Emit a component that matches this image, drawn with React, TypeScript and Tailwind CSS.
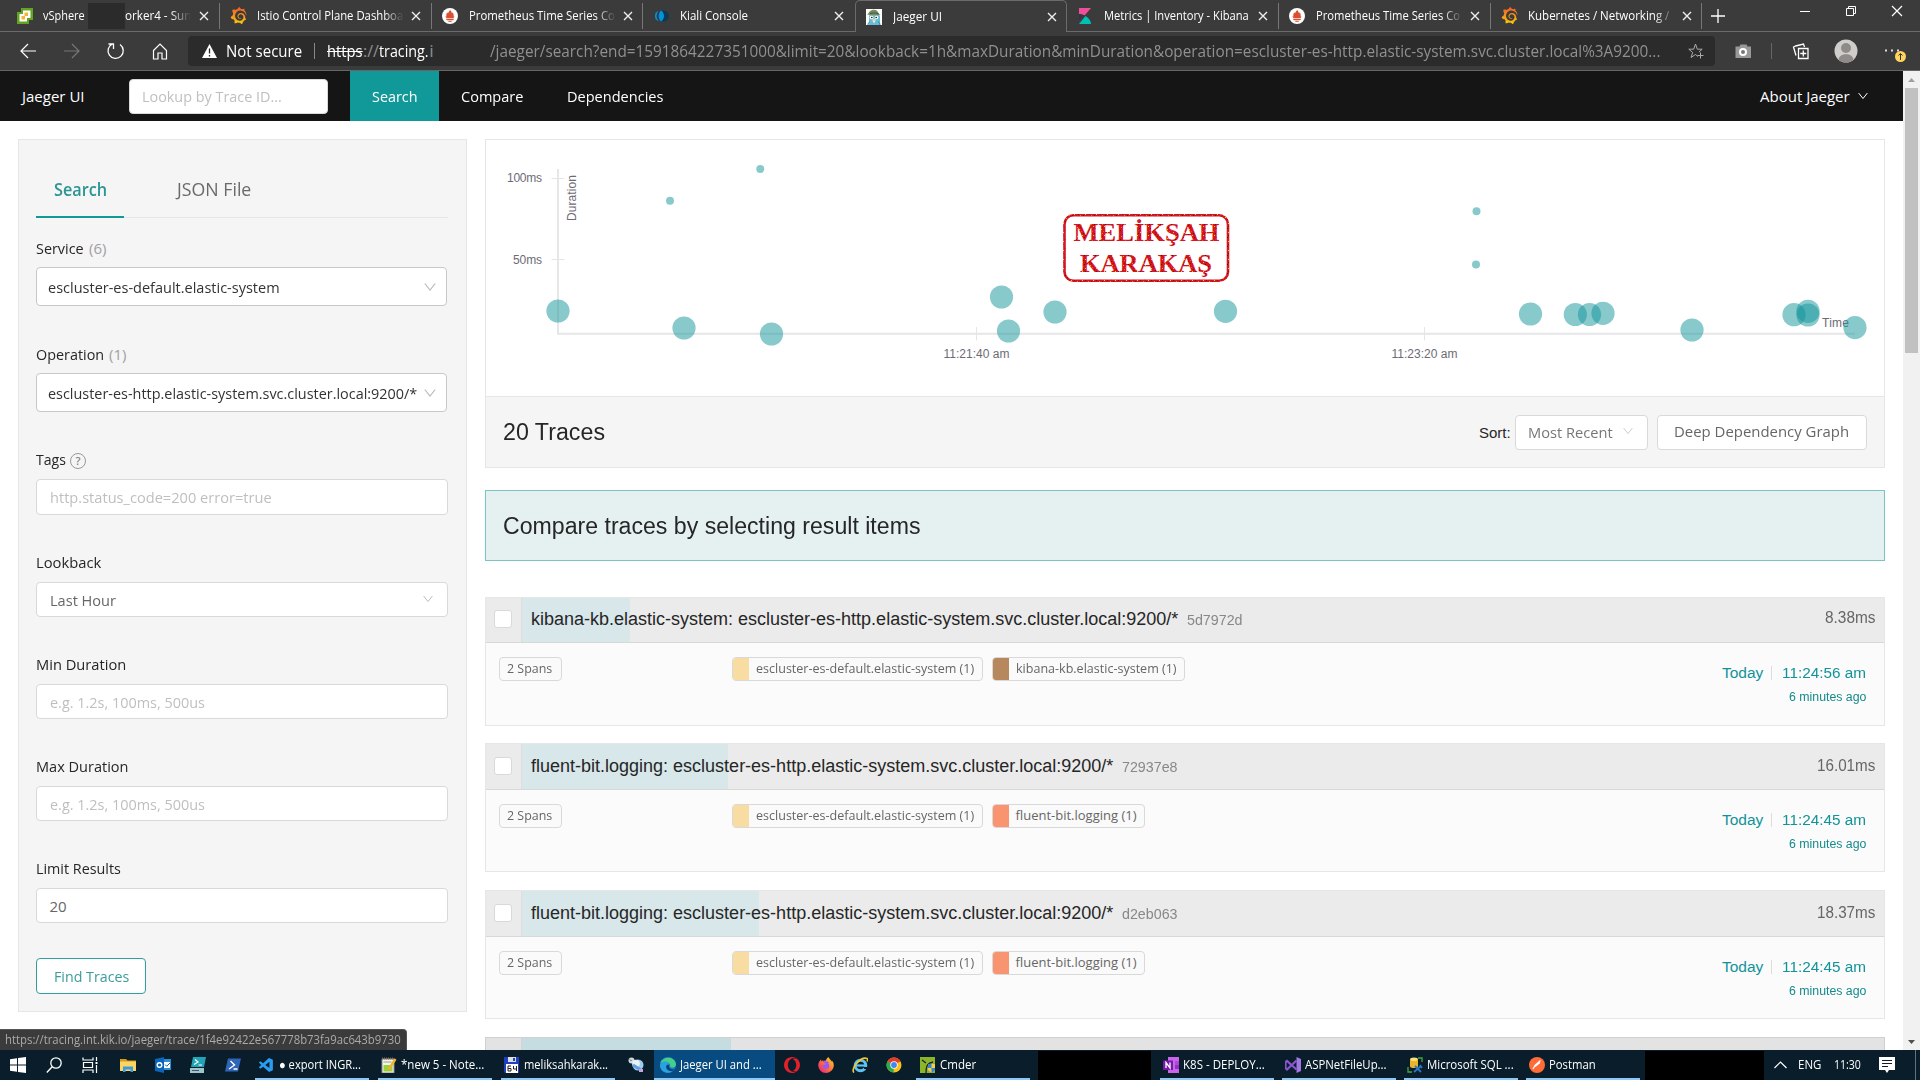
import React, { useLayoutEffect, useRef, useState } from "react";
import { SiGrafana, SiOpera, SiFirefoxbrowser } from "react-icons/si";
import { VscVscode } from "react-icons/vsc";

/** Single line of text condensed or stretched to an exact width. */
function Fit({ w, className = "", children }: { w: number; className?: string; children: React.ReactNode }) {
  const ref = useRef<HTMLSpanElement>(null);
  const [k, setK] = useState(1);
  useLayoutEffect(() => {
    if (ref.current) setK(w / ref.current.offsetWidth);
  }, [w]);
  return (
    <span className={"inline-block shrink-0 whitespace-nowrap " + className} style={{ width: w }}>
      <span ref={ref} className="inline-block origin-left" style={{ transform: `scaleX(${k})` }}>
        {children}
      </span>
    </span>
  );
}

/* ---------- favicons ---------- */

const VSphere = () => (
  <svg width="16" height="16" viewBox="0 0 16 16">
    <path d="M4 0h12v12h-4v4H0V4h4z" fill="#62a420" />
    <path d="M6 2.500h7.500v7.500H10v3.500H2.500V6H6z" fill="#fff" />
    <rect x="7.500" y="4.500" width="3.500" height="3.500" fill="#f2b632" />
    <rect x="4.500" y="8" width="3.500" height="3.500" fill="#f2b632" />
  </svg>
);
const Grafana = () => (
  <>
    <svg width="0" height="0" className="absolute">
      <linearGradient id="graf" x1="0" y1="0" x2="0" y2="1">
        <stop offset="0" stopColor="#f05a28" />
        <stop offset="1" stopColor="#fbca0a" />
      </linearGradient>
    </svg>
    <SiGrafana size={17} fill="url(#graf)" />
  </>
);
const Prometheus = () => (
  <span className="flex size-4 items-center justify-center rounded-full bg-white">
    <svg width="16" height="16" viewBox="0 0 16 16">
      <path d="M8 1.500c.4 1.400 1.900 2.300 2 3.900.3-.3.5-.7.5-1.200C11.700 5.500 12 7 11.400 8.500l1-.3c-.2 1-.9 1.800-.9 1.800h-7S3.700 9.200 3.500 8.200l1.100.3C4 7 4.300 5.500 5.500 4.200c0 .7.2 1 .5 1.300C6.200 4 7.800 3.200 8 1.500z" fill="#da4e31" />
      <rect x="4.300" y="10.700" width="7.400" height="1.400" fill="#da4e31" />
      <path d="M5.500 12.800h5c-.5 1.500-4.500 1.500-5 0z" fill="#da4e31" />
    </svg>
  </span>
);
const Kiali = () => (
  <svg width="16" height="16" viewBox="0 0 16 16">
    <circle cx="10.500" cy="8" r="5.500" fill="#0b3a52" />
    <path d="M5.500 3a5.300 5.300 0 0 0 0 10 8 8 0 0 1 0-10z" fill="#0093dd" />
    <path d="M8 2.500c4 2.500 4 8.500 0 11-3.200-3-3.200-8 0-11z" fill="#0093dd" />
  </svg>
);
const JaegerIcon = () => (
  <svg width="16" height="16" viewBox="0 0 16 16">
    <rect width="16" height="16" fill="#fff" />
    <path d="M3 16V7c0-3 10-3 11 0v9z" fill="#68bfd5" />
    <path d="M1 5.500c2-1 2-3.500 5-4.500s6 0 6.500 3.500l2 1.500C10 6 5 6.500 1 5.500z" fill="#7c8a5d" />
    <path d="M4 4.500c3-.8 6-.8 9 .5" stroke="#47552f" fill="none" />
    <circle cx="5.500" cy="8.500" r="1.800" fill="#fff" /><circle cx="10.500" cy="8.500" r="1.800" fill="#fff" />
    <circle cx="5.800" cy="8.500" r=".8" fill="#111" /><circle cx="10.200" cy="8.500" r=".8" fill="#111" />
    <ellipse cx="8" cy="11" rx="1.800" ry="1.200" fill="#e9d3b2" /><path d="M7.200 12h1.600v1.500H7.200z" fill="#fff" />
    <path d="M2 16c0-2 1-3 2-3M14 16c0-2-1-3-2-3" stroke="#3b7d92" fill="none" />
  </svg>
);
const Kibana = () => (
  <svg width="16" height="16" viewBox="0 0 16 16">
    <path d="M2 0h12L2 14z" fill="#f04e98" />
    <path d="M2 6c2.500 0 4.500.6 6 1.600L2 14z" fill="#343741" />
    <path d="M8.500 8C12 10 14 13 14 16H2z" fill="#00bfb3" />
  </svg>
);

const X = () => (
  <svg width="10" height="10" viewBox="0 0 10 10" className="shrink-0">
    <path d="M1 1l8 8M9 1L1 9" stroke="#eee" strokeWidth="1.400" />
  </svg>
);

const tabs = [
  { icon: <VSphere />, text: "vSphere", w: 42, masked: true },
  { icon: <Grafana />, text: "Istio Control Plane Dashboa", w: 146, fade: true },
  { icon: <Prometheus />, text: "Prometheus Time Series Co", w: 146, fade: true },
  { icon: <Kiali />, text: "Kiali Console", w: 68 },
  { icon: <JaegerIcon />, text: "Jaeger UI", w: 49, active: true },
  { icon: <Kibana />, text: "Metrics | Inventory - Kibana", w: 145 },
  { icon: <Prometheus />, text: "Prometheus Time Series Co", w: 144, fade: true },
  { icon: <Grafana />, text: "Kubernetes / Networking /", w: 141, fade: true },
];

function TabStrip() {
  return (
    <div className="flex h-8 shrink-0 bg-[#3b3b3b] text-[12px] leading-[32px] text-white">
      <div className="w-[8px] border-b border-[#6b6b6b]" />
      {tabs.map((t, i) => (
        <div
          key={i}
          className={
            "relative flex w-[211.800px] shrink-0 items-center " +
            (t.active ? "rounded-t-[5px] border border-b-0 border-[#6b6b6b]" : "border-b border-[#6b6b6b]")
          }
        >
          <span className={"flex shrink-0 items-center " + (i === 0 ? "ml-[9px] w-[26px]" : "ml-[10px] w-[27px]")}>{t.icon}</span>
          <span className={"flex items-center overflow-hidden " + (i === 0 ? "w-[148px] " : "w-[147px] ") + (t.fade || t.masked ? "[mask-image:linear-gradient(to_right,black_86%,transparent)]" : "")}>
            <Fit w={t.w}>{t.text}</Fit>
            {t.masked && (
              <>
                <span className="ml-[3px] h-[26px] w-[37px] shrink-0 bg-[#2b2b2b]" />
                <Fit w={66}>orker4 - Sun</Fit>
              </>
            )}
          </span>
          <span className={"flex " + (i === 0 ? "ml-[8px]" : "ml-[7px]")}><X /></span>
          {!t.active && i !== 3 && <span className="ml-auto h-[26px] w-px bg-[#777]" />}
        </div>
      ))}
      <div className="flex flex-1 items-center border-b border-[#6b6b6b] pl-[9px]">
        <svg width="14" height="14"><path d="M7 0v14M0 7h14" stroke="#fff" strokeWidth="1.300" /></svg>
        <svg width="104" height="14" viewBox="0 0 104 14" className="mb-[9px] ml-[74px]">
          <path d="M1 7.500h10" stroke="#fff" />
          <path d="M47.500 4.500h7v7h-7zM49.500 4.500v-2h7v7h-2" stroke="#fff" fill="none" />
          <path d="M93 2l10 10M103 2l-10 10" stroke="#fff" strokeWidth="1.200" />
        </svg>
      </div>
    </div>
  );
}

function AddressBar() {
  return (
    <div className="flex h-[39px] shrink-0 items-center border-b border-[#666] bg-[#3b3b3b] text-[16px] text-white">
      <svg width="188" height="38" viewBox="0 0 188 38" fill="none" className="shrink-0">
        <path d="M36 19H21M28 12l-7 7 7 7" stroke="#fff" strokeWidth="1.200" />
        <path d="M64 19h15M72 12l7 7-7 7" stroke="#777" strokeWidth="1.200" />
        <path d="M120 12.500a7.600 7.600 0 1 1-7.500-.7M108.500 12h5v5" stroke="#fff" strokeWidth="1.300" />
        <path d="M153.500 18.500l6.500-6.500 6.500 6.500v8.500h-4.500v-6h-4v6h-4.500z" stroke="#fff" strokeWidth="1.200" />
      </svg>
      <div className="flex h-[30px] w-[1527px] items-center rounded-[4px] bg-[#2b2b2b]">
        <svg width="15" height="14" viewBox="0 0 15 14" className="ml-[14px]">
          <path d="M7.500 0L15 14H0z" fill="#fff" /><path d="M7.500 4.500v5M7.500 11v1.500" stroke="#222" strokeWidth="1.300" />
        </svg>
        <Fit w={76} className="ml-[9px]">Not secure</Fit>
        <span className="ml-[12px] h-4 w-px bg-[#888]" />
        <Fit w={36} className="ml-[12px]"><s>https</s></Fit>
        <Fit w={16} className="text-[#909090]">://</Fit>
        <Fit w={50}>tracing.</Fit>
        <Fit w={5} className="text-[#7a8a90]">i</Fit>
        <Fit w={1170} className="ml-[56px] text-[#909090]">
          /jaeger/search?end=1591864227351000&amp;limit=20&amp;lookback=1h&amp;maxDuration&amp;minDuration&amp;operation=escluster-es-http.elastic-system.svc.cluster.local%3A9200...
        </Fit>
        <svg width="16" height="16" viewBox="0 0 16 16" className="ml-[28px]" fill="none" stroke="#aaa">
          <path d="M10 13.500L7.500 11.500 3 14.500l1.700-5L.8 6.200h4.900L7.500 1l1.800 5.200h4.900l-3.300 2.800M12.500 9.500v6M9.500 12.500h6" />
        </svg>
      </div>
      <svg width="205" height="38" viewBox="0 0 205 38" fill="none" className="shrink-0">
        <path d="M20.500 14.500h4l1-2h6l1 2h3.500v11.500H20.500z" fill="#999" /><circle cx="28" cy="20" r="3" stroke="#fff" strokeWidth="2" fill="#777" />
        <path d="M56.500 11v16" stroke="#666" />
        <path d="M83.500 16.500h9.500v10h-9.500zM88.300 18.500v6M85.300 21.500h6M81 23.500l-2.500-8.500 3-1.500M80.500 14l8-2 1 3" stroke="#fff" strokeWidth="1.300" />
        <circle cx="131" cy="19" r="11.500" fill="#d0cecb" /><circle cx="131" cy="16" r="5" fill="#8e8b88" />
        <path d="M123.500 27.500c1-7 14-7 15 0-4 4-11 4-15 0z" fill="#8e8b88" />
        <path d="M170 18.500h2M176 18.500h2M182 18.500h2" stroke="#ddd" strokeWidth="2" />
        <circle cx="185.500" cy="24.500" r="5.500" fill="#ffd35c" /><path d="M185.500 28v-6M183.500 23.500l2-2 2 2" stroke="#333" />
      </svg>
    </div>
  );
}

const Chevron = ({ c = "#bbb", s = 12 }: { c?: string; s?: number }) => (
  <svg width={s} height={s} viewBox="0 0 12 12" className="shrink-0">
    <path d="M.8 2.500L6 9l5.200-6.500" stroke={c} strokeWidth="1.200" fill="none" />
  </svg>
);

function Nav() {
  return (
    <div className="flex h-[50px] shrink-0 items-center bg-[#151515] text-[15px] text-white">
      <Fit w={63} className="ml-[22px]">Jaeger UI</Fit>
      <div className="ml-[44px] flex h-[35px] w-[199px] items-center rounded-[4px] border border-[#d9d9d9] bg-white pl-[12px] text-[#bfbfbf]">
        <Fit w={140}>Lookup by Trace ID...</Fit>
      </div>
      <div className="ml-[22px] flex h-full w-[89px] items-center bg-[#119999] pl-[22px]"><Fit w={46}>Search</Fit></div>
      <Fit w={62} className="ml-[22px]">Compare</Fit>
      <Fit w={96} className="ml-[44px]">Dependencies</Fit>
      <Fit w={90} className="mr-[8px] ml-auto">About Jaeger</Fit>
      <span className="mr-[35px] flex"><Chevron c="#fff" s={10} /></span>
    </div>
  );
}

type FieldProps = { label: string; lw: number; extra?: React.ReactNode; value: string; vw: number; tall?: boolean; tone: string; arrow?: boolean; cls: string; box: string };
function Field({ label, lw, extra, value, vw, tall, tone, arrow, cls, box }: FieldProps) {
  return (
    <div className={cls}>
      <div className="flex h-5 items-center pb-[2px] text-[#262626]">
        <Fit w={lw}>{label}</Fit>
        {extra}
      </div>
      <div className={"flex items-center rounded-[4px] border bg-white " + (tall ? "pl-[11px] " : "pl-[12.500px] ") + box + " " + tone}>
        <Fit w={vw}>{value}</Fit>
        {arrow && <span className={tall ? "mr-[10px] ml-auto flex" : "mr-[14px] mb-[2px] ml-auto flex"}><Chevron s={tall ? 12 : 10} /></span>}
      </div>
    </div>
  );
}

function SearchForm() {
  const tall = "mt-[8px] h-[39px] w-[411px] border-[#c8c8c8]";
  const low = "mt-[9px] h-[35px] w-[412px] border-[#d9d9d9]";
  return (
    <div className="ml-[18px] h-[873px] w-[449px] shrink-0 border border-[#e6e6e6] bg-[#f5f5f5] pl-[17px] text-[15px] leading-5">
      <div className="flex h-[78px] w-[412px] border-b border-[#e6e6e6] text-[17.500px]">
        <div className="-mb-px flex w-[88px] items-center border-b-2 border-[#119999] pt-[21px] pl-[18px] font-semibold text-[#2a9594]">
          <Fit w={53}>Search</Fit>
        </div>
        <div className="ml-[53px] flex items-center pt-[20px] text-[#6a6a6a]"><Fit w={74}>JSON File</Fit></div>
      </div>
      <Field cls="mt-[21px]" label="Service" lw={48} extra={<Fit w={17} className="ml-[5px] text-[#a0a0a0]">(6)</Fit>} value="escluster-es-default.elastic-system" vw={232} tall arrow tone="text-[#333]" box={tall} />
      <Field cls="mt-[39px]" label="Operation" lw={68} extra={<Fit w={17} className="ml-[5px] text-[#a0a0a0]">(1)</Fit>} value="escluster-es-http.elastic-system.svc.cluster.local:9200/*" vw={369} tall arrow tone="text-[#333]" box={tall} />
      <Field
        cls="mt-[38px]" label="Tags" lw={30} value="http.status_code=200 error=true" vw={222} tone="text-[#bfbfbf]"
        box="mt-[9px] h-[36px] w-[412px] border-[#d9d9d9]"
        extra={<span className="mt-[4px] ml-[4px] flex size-4 shrink-0 items-center justify-center rounded-full border border-[#999] text-[11px] font-semibold text-[#888]">?</span>}
      />
      <Field cls="mt-[38px]" label="Lookback" lw={65} value="Last Hour" vw={66} arrow tone="text-[#666]" box={low} />
      <Field cls="mt-[38px]" label="Min Duration" lw={90} value="e.g. 1.2s, 100ms, 500us" vw={155} tone="text-[#bfbfbf]" box={low} />
      <Field cls="mt-[38px]" label="Max Duration" lw={92} value="e.g. 1.2s, 100ms, 500us" vw={155} tone="text-[#bfbfbf]" box={low} />
      <Field cls="mt-[38px]" label="Limit Results" lw={85} value="20" vw={17} tone="text-[#666]" box={low} />
      <div className="mt-[35px] flex h-[36px] w-[110px] items-center rounded-[4px] border border-[#2f9f9e] bg-white pl-[17px] text-[#3a9c9b]">
        <Fit w={75}>Find Traces</Fit>
      </div>
    </div>
  );
}

const dots: [number, number, number][] = [
  [558, 311, 11.6], [684, 328, 11.6], [771.5, 334, 11.6], [1001.5, 297, 11.6], [1008.5, 331, 11.6], [1055, 312, 11.6],
  [1225.5, 311.3, 11.6], [1530.5, 314, 11.6], [1575.3, 314.5, 11.6], [1589.5, 314.5, 11.6], [1603, 313.3, 11.6],
  [1692, 330, 11.6], [1794, 314.7, 11.6], [1808, 311.3, 11.6], [1808, 315, 11.6], [1855, 327.6, 11.6],
  [670, 200.7, 4], [760.3, 169, 4], [1476.5, 211.2, 4], [1476, 264.6, 4],
];

/* Speckles of the stamp's ink, on an 11 x 9 tile. */
const specks: [number, number, string][] = [
  [0, 0, "#7a1010"], [4, 1, "#f2c832"], [8, 0, "#c0208a"], [2, 2, "#8a1414"], [6, 3, "#5e0c0c"], [10, 2, "#ee7a30"],
  [1, 4, "#e0b030"], [5, 5, "#c42a92"], [9, 5, "#6e1010"], [3, 6, "#f04040"], [7, 7, "#e8c040"], [0, 7, "#a01818"],
  [5, 8, "#6e1010"], [10, 8, "#b82080"], [2, 8, "#e66a20"], [7, 1, "#8a1010"],
];

function Chart() {
  return (
    <svg width="1398" height="256" viewBox="486 140 1398 256" fontFamily="Liberation Sans, Arial, sans-serif" fontSize="12" fill="#6b6b76">
      <defs>
        <pattern id="ink" width="11" height="9" patternUnits="userSpaceOnUse">
          <rect width="11" height="9" fill="#d8141c" />
          {specks.map(([x, y, c]) => <rect key={x + "-" + y} x={x} y={y} width="1" height="1" fill={c} />)}
        </pattern>
      </defs>
      <g stroke="#e6e6e9" fill="none">
        <path d="M558 169v165.500M557 333.700h1298" strokeWidth="2" />
        <path d="M551.500 178.500h13M551.500 259.500h13M976.500 327v13.500M1424.500 327v13.500" />
      </g>
      <text x="507" y="182" textLength="35">100ms</text>
      <text x="513" y="264" textLength="29">50ms</text>
      <text x="943.500" y="358" textLength="66">11:21:40 am</text>
      <text x="1391.500" y="358" textLength="66">11:23:20 am</text>
      <text transform="translate(576 221) rotate(-90)" textLength="46">Duration</text>
      <text x="1822" y="327" textLength="27">Time</text>
      {dots.map(([x, y, r], i) => <circle key={i} cx={x} cy={y} r={r} fill="#12939a" opacity=".5" />)}
      <rect x="1064.500" y="215.300" width="163.500" height="65.500" rx="9" fill="none" stroke="url(#ink)" strokeWidth="2.600" />
      <g fontFamily="Liberation Serif, Times New Roman, serif" fontWeight="bold" fontSize="26" fill="url(#ink)">
        <text x="1073.500" y="241" textLength="146" lengthAdjust="spacingAndGlyphs">MELİKŞAH</text>
        <text x="1080" y="272.300" textLength="132" lengthAdjust="spacingAndGlyphs">KARAKAŞ</text>
      </g>
    </svg>
  );
}

const arial = "font-['Liberation_Sans',Arial,sans-serif]";

type Trace = { title: string; tw: number; id: string; bar: number; dur: string; dw: number; tag: string; tagW: number; swatch: string; time: string; cls: string; head: string };
const es = "escluster-es-http.elastic-system.svc.cluster.local:9200/*";
const traces: Trace[] = [
  { title: "kibana-kb.elastic-system: " + es, tw: 647, id: "5d7972d", bar: 109, dur: "8.38ms", dw: 50, tag: "kibana-kb.elastic-system (1)", tagW: 161, swatch: "bg-[#b7885e]", time: "11:24:56 am", cls: "mt-[36px] h-[129px]", head: "h-[45px] pb-[2px]" },
  { title: "fluent-bit.logging: " + es, tw: 582, id: "72937e8", bar: 207, dur: "16.01ms", dw: 58, tag: "fluent-bit.logging (1)", tagW: 121, swatch: "bg-[#f89570]", time: "11:24:45 am", cls: "mt-[17px] h-[129px]", head: "h-[46px]" },
  { title: "fluent-bit.logging: " + es, tw: 582, id: "d2eb063", bar: 238, dur: "18.37ms", dw: 58, tag: "fluent-bit.logging (1)", tagW: 121, swatch: "bg-[#f89570]", time: "11:24:45 am", cls: "mt-[18px] h-[129px]", head: "h-[46px]" },
];

const Tag = ({ w, swatch, children }: { w: number; swatch: string; children: string }) => (
  <span className="mr-[9px] flex h-6 items-center overflow-hidden rounded-[4px] border border-[#d9d9d9] bg-[#fafafa] pr-[7.500px] text-[#666]">
    <span className={"-my-px -ml-px h-6 w-[17px] " + swatch} />
    <Fit w={w} className="ml-[7px]">{children}</Fit>
  </span>
);

function Result({ t }: { t: Trace }) {
  const first = t.head !== "h-[46px]";
  return (
    <div className={"shrink-0 border border-[#e6e6e6] bg-[#fbfbfb] " + t.cls}>
      <div className={"flex border-b border-[#d8d8d8] bg-[#ebebeb] " + (first ? "h-[45px] " : "h-[46px] ") + arial}>
        <div className="flex w-[36px] items-center border-r border-[#ddd] pl-[8px]">
          <span className={"size-[18px] rounded-[3px] border border-[#d9d9d9] bg-white " + (first ? "mb-[2px]" : "mb-px")} />
        </div>
        <div className={"relative flex flex-1 items-center " + (first ? "pb-[2px]" : "")}>
          <div className="absolute inset-y-0 left-0 bg-[#d7e7ea]" style={{ width: t.bar - 1 }} />
          <Fit w={t.tw} className="relative ml-[9px] text-[18px] text-[#262626]">{t.title}</Fit>
          <Fit w={56} className="relative mt-[2px] ml-[9px] text-[14px] text-[#888]">{t.id}</Fit>
          <Fit w={t.dw} className="mr-[9px] mb-[2px] ml-auto text-[16px] text-[#666]">{t.dur}</Fit>
        </div>
      </div>
      <div className="flex pt-[14px] text-[13px]">
        <span className="ml-[13px] flex h-6 w-[63px] items-center rounded-[4px] border border-[#d9d9d9] bg-[#fafafa] pl-[7px] text-[#666]"><Fit w={45}>2 Spans</Fit></span>
        <span className="ml-[170px] flex">
          <Tag w={218} swatch="bg-[#f8dca1]">escluster-es-default.elastic-system (1)</Tag>
          <Tag w={t.tagW} swatch={t.swatch}>{t.tag}</Tag>
        </span>
        <div className={"mt-[6px] mr-[18px] ml-auto flex flex-col items-end text-[#11939a] " + arial}>
          <div className="flex h-5 items-center text-[15.500px]">
            <Fit w={41}>Today</Fit>
            <span className="mr-[10px] ml-[8px] h-[14px] w-px bg-[#ddd]" />
            <Fit w={84}>{t.time}</Fit>
          </div>
          <Fit w={77} className="mt-[4px] text-[12px] leading-5 text-[#158a8c]">6 minutes ago</Fit>
        </div>
      </div>
    </div>
  );
}

/* ---------- taskbar ---------- */

const Ico = ({ children }: { children: React.ReactNode }) => (
  <svg width="16" height="16" viewBox="0 0 16 16" fill="none" className="shrink-0">{children}</svg>
);
const icons = {
  win: <Ico><path d="M0 2.200L7 1.200v6.300H0zM8 1l8-1v7.500H8zM0 8.500h7v6.300l-7-1zM8 8.500h8V16l-8-1z" fill="#fff" /></Ico>,
  search: <Ico><circle cx="10" cy="6" r="5.200" stroke="#fff" strokeWidth="1.300" /><path d="M6.200 9.800L.8 15.500" stroke="#fff" strokeWidth="1.400" /></Ico>,
  task: <Ico><path d="M1 .5v2.500h10V.5M1 16v-3h10v3M1.500 5.500h9v5h-9zM14.500 0v4M14.500 8v8" stroke="#fff" strokeWidth="1.200" /><path d="M13.500 5h2v2h-2z" fill="#fff" /></Ico>,
  folder: <Ico><path d="M0 2h6l1.500 1.500H16V14H0z" fill="#d99a1c" /><path d="M0 4.500h16V14H0z" fill="#fcd462" /><path d="M3 15V9.500h10V15h-2.500v-2.500h-5V15z" fill="#3c9be0" /></Ico>,
  outlook: <Ico><path d="M6 2h10v11H6z" fill="#2a8dd8" /><path d="M9 5h6v6H9z" fill="#fff" /><path d="M10 7.500l1.700 1.700L15 6" stroke="#0a5fa8" /><path d="M0 2l9-2v16l-9-2z" fill="#0b64b8" /><circle cx="4.500" cy="8" r="2.300" stroke="#fff" strokeWidth="1.400" /></Ico>,
  ise: <Ico><path d="M3 0h13l-2 10H1z" fill="#1fa5b5" /><path d="M5 2.500l3 2.500-4 2.500M8.500 8h3.500" stroke="#fff" strokeWidth="1.200" /><path d="M0 11h14v5H0z" fill="#9fc4cc" /><path d="M2 13.500h7" stroke="#456" /></Ico>,
  ps: <Ico><path d="M3 1.500h13l-3 13H0z" fill="#2f65b8" /><path d="M5.500 4l4 4-5.500 4M8.500 12h4" stroke="#fff" strokeWidth="1.400" /></Ico>,
  npp: <Ico><path d="M1 2h12v14H1z" fill="#f3f6e4" stroke="#889" /><path d="M2.500 8h9v6.500h-9z" fill="#9ad13b" /><path d="M2.500 5h8" stroke="#999" /><path d="M1 1.500h12" stroke="#8a6a50" strokeWidth="2" strokeDasharray="1 1" /><path d="M14.500 2L7.500 12.500" stroke="#f0b32d" strokeWidth="2.400" /></Ico>,
  tc: <Ico><path d="M0 0h15v16H1l-1-1z" fill="#1f3fc0" /><path d="M4 0h8v5H4z" fill="#ddd" /><path d="M9 1h2v3H9z" fill="#1f3fc0" /><path d="M2 7h12v9H2z" fill="#fff" /><path d="M7 9H4v5h3v-2.500H4M9.500 9v3H13M12.500 9v5" stroke="#222" /></Ico>,
  doc: <Ico><circle cx="3.500" cy="3.500" r="3" fill="#ccd9df" /><circle cx="10" cy="8" r="5.500" fill="#9fcdea" /><circle cx="8" cy="6.500" r="3.800" fill="#e8f2f6" /><path d="M5 8l8 5" stroke="#5f9fe0" strokeWidth="3" /><path d="M11 12h4v3h-4z" fill="#c9a4dd" /><path d="M2 2.500l1.500 1.500" stroke="#444" /></Ico>,
  edge: <Ico><circle cx="8" cy="8" r="8" fill="#1a77c9" /><path d="M.3 6C2 0 14-2 16 7c.3 4-5 4.500-6 2.500 1-3-2-5-5-4.500-2 .2-4 .5-4.700 1z" fill="#45cf87" /><path d="M.2 7c2-4 8-3.500 8.800 0C6 8 6 13 12 14.500 5 18-1 13 .2 7z" fill="#2ba2e0" /><path d="M7 7.500c-2 3 0 6.500 4.500 6.500 1 0 2-.5 3-1.500-3 .5-6-1-5.500-4z" fill="#0b3d73" /></Ico>,
  ie: <Ico><circle cx="8.500" cy="8.500" r="5.300" stroke="#5cc3f2" strokeWidth="3" /><path d="M4 8.500h10" stroke="#5cc3f2" strokeWidth="2.200" /><path d="M12 10h4v2h-4z" fill="#0a1d2b" /><path d="M2 15.500C-2 12 9-1 15 1.500c1 .5.500 2 0 3" stroke="#f4c534" strokeWidth="1.600" /></Ico>,
  chrome: <Ico><circle cx="8" cy="8" r="7.500" fill="#fbc116" /><path d="M8 8L1.500 4.200A7.500 7.500 0 0 1 14.500 4.200z" fill="#e33b2e" /><path d="M8 8L1.500 4.200A7.500 7.500 0 0 0 7.500 15.500z" fill="#2da94f" /><circle cx="8" cy="8" r="3.700" fill="#fff" /><circle cx="8" cy="8" r="2.900" fill="#4086f4" /></Ico>,
  cmder: <Ico><path d="M0 0h15v16H0z" fill="#8bb62b" /><path d="M2 3l4 3M6 16c0-8 2-10 7-11" stroke="#222" strokeWidth="1.300" /><path d="M8 7h7v6l-3.500 3L8 13z" fill="#3b82d4" /><path d="M11.500 7H15v4h-3.500zM8 11h3.500v5L8 13z" fill="#f4d03f" /></Ico>,
  onenote: <Ico><path d="M5 0h11v16H5z" fill="#ca64ea" /><path d="M12 4h4v4h-4z" fill="#ae4bd5" /><path d="M12 8h4v4h-4z" fill="#9332bf" /><path d="M0 3.500h10v9.500H0z" fill="#7719aa" /><path d="M3 11V5.500l4 5.500V5.500" stroke="#fff" strokeWidth="1.300" /></Ico>,
  vs: <Ico><path d="M11.500 0L16 2v12l-4.500 2z" fill="#a178e0" /><path d="M11.500 3.500L2 12.500.5 11V5L2 4l9.500 8.500" stroke="#8a55cf" strokeWidth="2.200" /></Ico>,
  sql: <Ico><ellipse cx="7" cy="2.500" rx="4" ry="2" fill="#f8e27c" /><path d="M3 2.500v7c1 2 7 2 8 0v-7c-1 2-7 2-8 0z" fill="#eab42b" /><path d="M11 1h4v4M1 10v5h4" stroke="#47a53c" strokeWidth="1.300" /><path d="M7 15l7-6M8 9l6 6M13 8l2 3" stroke="#2a78c2" strokeWidth="1.800" /></Ico>,
  postman: <Ico><circle cx="8" cy="8" r="8" fill="#ff6c37" /><path d="M4 12l2-3.500L11.500 3.500M6 9.500l5-4" stroke="#fff" strokeWidth="1.200" /></Ico>,
};

type Item = { icon: React.ReactNode; text: string; w: number; gap: string; pad: string; active?: boolean };
function TaskItem({ icon, text, w, gap, pad, active }: Item) {
  return (
    <div className={"flex h-[30px] shrink-0 items-center border-b-2 border-[#8ec8f6] pt-[2px] " + gap + " " + (active ? "w-[121px] bg-[#074b80]" : "w-[114px]")}>
      <span className={"flex items-center " + pad}>{icon}</span>
      <Fit w={w} className="ml-[4px]">{text}</Fit>
    </div>
  );
}

function Taskbar() {
  return (
    <div className="flex h-[30px] shrink-0 items-center bg-[#0a1d2b] text-[12.500px] text-white">
      <div className="ml-[10px] flex w-[245px] shrink-0 items-center">
        {icons.win}<span className="w-5" />{icons.search}<span className="w-5" />{icons.task}<span className="w-[22px]" />{icons.folder}
        <span className="w-[19px]" />{icons.outlook}<span className="w-[19px]" />{icons.ise}<span className="w-[19px]" />{icons.ps}
      </div>
      <TaskItem icon={<VscVscode size={17} color="#2a9df0" />} text="● export INGR..." w={82} gap="" pad="ml-[3px]" />
      <TaskItem icon={icons.npp} text="*new 5 - Note..." w={83} gap="ml-[9px]" pad="ml-[3px]" />
      <TaskItem icon={icons.tc} text="meliksahkarak..." w={84} gap="ml-[9px]" pad="ml-[3px]" />
      <span className="ml-[13px] flex shrink-0">{icons.doc}</span>
      <TaskItem icon={icons.edge} text="Jaeger UI and ..." w={82} gap="ml-[10px]" pad="ml-[6px]" active />
      <div className="ml-[9px] flex w-[132px] shrink-0 items-center">
        <SiOpera size={16} color="#e0202c" className="shrink-0" />
        <svg width="0" height="0" className="absolute">
          <linearGradient id="fox" x1="1" y1="0" x2="0" y2="1"><stop offset="0" stopColor="#ffe226" /><stop offset=".5" stopColor="#ff7139" /><stop offset="1" stopColor="#e31587" /></linearGradient>
        </svg>
        <span className="ml-[18px] flex shrink-0 rounded-full bg-[radial-gradient(#9059ff_35%,transparent_45%)]"><SiFirefoxbrowser size={16} fill="url(#fox)" /></span>
        <span className="ml-[18px] flex shrink-0">{icons.ie}</span>
        <span className="ml-[18px] flex shrink-0">{icons.chrome}</span>
      </div>
      <TaskItem icon={icons.cmder} text="Cmder" w={36} gap="" pad="ml-[4px]" />
      <div className="mt-px ml-[8px] h-[29px] w-[113px] shrink-0 bg-black" />
      <TaskItem icon={icons.onenote} text="K8S - DEPLOY..." w={82} gap="ml-[9px]" pad="ml-[3px]" />
      <TaskItem icon={icons.vs} text="ASPNetFileUp..." w={82} gap="ml-[8px]" pad="ml-[3px]" />
      <TaskItem icon={icons.sql} text="Microsoft SQL ..." w={87} gap="ml-[8px]" pad="ml-[3px]" />
      <TaskItem icon={icons.postman} text="Postman" w={47} gap="ml-[8px]" pad="ml-[3px]" />
      <div className="mt-px ml-[5px] h-[29px] w-[119px] shrink-0 bg-black" />
      <svg width="13" height="8" viewBox="0 0 13 8" className="ml-[10px] shrink-0"><path d="M.5 7l6-6 6 6" stroke="#fff" strokeWidth="1.200" fill="none" /></svg>
      <Fit w={23} className="ml-[11px]">ENG</Fit>
      <Fit w={27} className="ml-[13px]">11:30</Fit>
      <svg width="16" height="16" viewBox="0 0 16 16" className="ml-[18px] shrink-0"><path d="M0 0h16v13h-6l-2 3-2-3H0z" fill="#fff" /><path d="M3 3.500h10M3 6.500h10M3 9.500h6" stroke="#0a1d2b" strokeWidth="1.200" /></svg>
      <span className="ml-[20px] h-full w-px bg-[#66727b]" />
    </div>
  );
}

export default function App() {
  return (
    <div className="flex h-[1080px] w-[1920px] flex-col overflow-hidden bg-white font-['Open_Sans','Noto_Sans',sans-serif]">
      <TabStrip />
      <AddressBar />
      <div className="relative flex h-[979px] shrink-0">
        <div className="flex w-[1903px] flex-col overflow-hidden">
          <Nav />
          <div className="flex pt-[18px]">
            <SearchForm />
            <div className="ml-[18px] flex h-[911px] w-[1400px] shrink-0 flex-col">
              <div className="h-[329px] shrink-0 border border-[#e6e6e6]">
                <Chart />
                <div className={"flex h-[71px] items-center border-t border-[#e6e6e6] bg-[#f5f5f5] pl-[17px] text-[#262626] " + arial}>
                  <Fit w={102} className="text-[23px]">20 Traces</Fit>
                  <Fit w={32} className="mt-[2px] ml-auto text-[15px]">Sort:</Fit>
                  <div className="ml-[4px] flex h-[35px] w-[133px] items-center rounded-[4px] border border-[#d9d9d9] bg-white pl-[12px] font-['Open_Sans',sans-serif] text-[15px] text-[#777]">
                    <Fit w={85}>Most Recent</Fit>
                    <span className="mb-[2px] ml-[10px] flex"><Chevron s={10} c="#ccc" /></span>
                  </div>
                  <div className="mr-[17px] ml-[9px] flex h-[35px] w-[210px] items-center rounded-[4px] border border-[#d9d9d9] bg-white pb-[2px] pl-[16px] font-['Open_Sans',sans-serif] text-[15px] text-[#666]">
                    <Fit w={175}>Deep Dependency Graph</Fit>
                  </div>
                </div>
              </div>
              <div className={"mt-[22px] flex h-[71px] shrink-0 items-center border border-[#79c4c2] bg-[#e5f0f0] pt-[2px] pl-[17px] text-[23px] text-[#262626] " + arial}>
                <Fit w={417}>Compare traces by selecting result items</Fit>
              </div>
              {traces.map((t) => <Result key={t.id} t={t} />)}
              <div className="mt-[18px] flex h-[20px] shrink-0 border border-b-0 border-[#d0d0d0] bg-[#e3e3e3]">
                <span className="w-[36px] border-r border-[#d4d4d4]" />
                <span className="w-[209px] bg-[#c5dce0]" />
              </div>
            </div>
          </div>
        </div>
        <div className="flex w-[17px] flex-col items-center justify-between bg-[#f1f1f1] pb-[6px]">
          <div className="flex flex-col items-center">
            <svg width="7" height="4" className="mt-[7px] mb-[6px]"><path d="M0 4l3.500-4L7 4z" fill="#a0a0a0" /></svg>
            <div className="h-[265px] w-[13px] bg-[#c1c1c1]" />
          </div>
          <svg width="7" height="4"><path d="M0 0l3.500 4L7 0z" fill="#505050" /></svg>
        </div>
        <div className="absolute bottom-0 left-0 flex h-[21px] w-[407px] items-center rounded-tr-[4px] border-t border-r border-[#555] bg-[#3b3b3b] pl-[5px] text-[12px] text-[#aaa]">
          <Fit w={396}>https://tracing.int.kik.io/jaeger/trace/1f4e92422e567778b73fa9ac643b9730</Fit>
        </div>
      </div>
      <Taskbar />
    </div>
  );
}
